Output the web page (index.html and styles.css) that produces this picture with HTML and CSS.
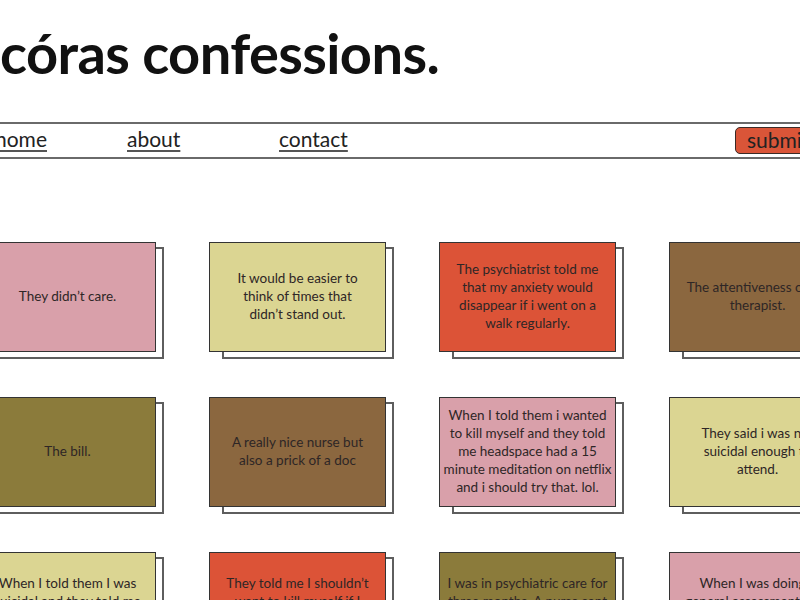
FILE: index.html
```html
<!DOCTYPE html>
<html lang="en">
<head>
<meta charset="utf-8">
<title>córas confessions.</title>
<link rel="stylesheet" href="styles.css">
</head>
<body>
<div class="page">
  <header class="masthead">
    <h1 class="title">córas confessions.</h1>
  </header>
  <nav class="nav">
    <ul class="nav-links">
      <li class="nav-item nav-home"><a href="#">home</a></li>
      <li class="nav-item nav-about"><a href="#">about</a></li>
      <li class="nav-item nav-contact"><a href="#">contact</a></li>
    </ul>
    <button class="submit">submit</button>
  </nav>
  <main class="grid">
    <div class="card pink"><p>They didn’t care.</p></div>
    <div class="card yellow"><p>It would be easier to<br>think of times that<br>didn’t stand out.</p></div>
    <div class="card orange"><p>The psychiatrist told me<br>that my anxiety would<br>disappear if i went on a<br>walk regularly.</p></div>
    <div class="card brown"><p>The attentiveness of my<br>therapist.</p></div>

    <div class="card olive"><p>The bill.</p></div>
    <div class="card brown"><p>A really nice nurse but<br>also a prick of a doc</p></div>
    <div class="card pink"><p>When I told them i wanted<br>to kill myself and they told<br>me headspace had a 15<br>minute meditation on netflix<br>and i should try that. lol.</p></div>
    <div class="card yellow"><p>They said i was not<br>suicidal enough to<br>attend.</p></div>

    <div class="card yellow top"><p>When I told them I was<br>suicidal and they told me<br>to go for a run.</p></div>
    <div class="card orange top"><p>They told me I shouldn’t<br>want to kill myself if I<br>had a family.</p></div>
    <div class="card olive top"><p>I was in psychiatric care for<br>three months. A nurse sent<br>me home.</p></div>
    <div class="card pink top"><p>When I was doing a<br>general assessment they<br>laughed.</p></div>
  </main>
</div>
</body>
</html>
```

FILE: styles.css
```css
html, body {
  margin: 0;
  padding: 0;
  background: #ffffff;
  overflow: hidden;
}

body {
  font-family: "Lato", "DejaVu Sans", sans-serif;
  color: #222222;
  width: 800px;
  height: 600px;
}

.page {
  margin-left: -21px;
  width: 888px;
}

.masthead {
  height: 122px;
  padding-left: 21px;
  box-sizing: border-box;
  padding-top: 25px;
}

.title {
  margin: 0;
  font-size: 56px;
  line-height: 56px;
  font-weight: 700;
  color: #111111;
  letter-spacing: -0.6px;
}

.nav {
  display: flex;
  align-items: center;
  height: 33px;
  border-top: 2px solid #6a6a6a;
  border-bottom: 2px solid #6a6a6a;
}

.nav-links {
  display: flex;
  list-style: none;
  margin: 0;
  padding: 0 0 4px 16px;
  flex: 1;
}

.nav-item a {
  font-size: 21px;
  color: #222222;
  text-decoration: underline;
  text-decoration-color: #555555;
  text-underline-offset: 3px;
}

.nav-home { width: 132px; }
.nav-about { width: 152px; }

.submit {
  margin-right: 22px;
  width: 110px;
  height: 27px;
  background: #da5538;
  border: 1px solid #3a2a26;
  border-radius: 5px;
  font-family: inherit;
  font-size: 21px;
  color: #222222;
  text-align: left;
  padding: 0 0 2px 11px;
  line-height: 22px;
}

.grid {
  position: relative;
  z-index: 0;
  display: grid;
  grid-template-columns: repeat(4, 177px);
  grid-auto-rows: 110px;
  column-gap: 53px;
  row-gap: 45px;
  margin-top: 83px;
}

.card {
  position: relative;
  box-sizing: border-box;
  border: 1px solid #333333;
  display: flex;
  align-items: center;
  justify-content: center;
  text-align: center;
  padding: 0 4px 3px;
}

.card::before {
  content: "";
  position: absolute;
  left: 12px;
  right: -9px;
  top: 4px;
  bottom: -8px;
  border: 2px solid #5e5e5e;
  background: #ffffff;
  z-index: -1;
}

.card p {
  margin: 0;
  font-size: 13.5px;
  line-height: 18px;
  color: #2e2626;
  white-space: nowrap;
}

.card.top {
  align-items: flex-start;
  padding-top: 21px;
}

.pink { background: #d9a0aa; }
.yellow { background: #dbd592; }
.orange { background: #dc5337; }
.brown { background: #8b673f; }
.olive { background: #8b7b3b; }
```
